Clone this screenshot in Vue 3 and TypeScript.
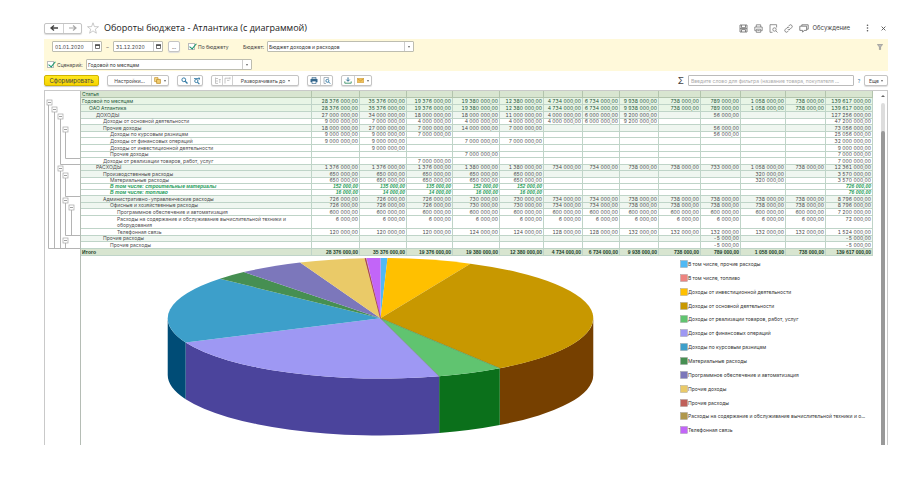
<script setup lang="ts">
import { ref } from 'vue'

interface Row {
  label: string
  level: number
  kind?: 'top' | 'parent' | 'note' | 'total'
  tight?: boolean
  values: (number | null)[]
}

interface Slice {
  label: string
  color: string
  wall?: string
  from: number
  to: number
}

const dateFrom = ref('01.01.2020')
const dateTo = ref('31.12.2020')
const byBudget = ref(true)
const byScenario = ref(true)
const filterText = ref('')

const _ = null
const all = [28376, 35376, 19376, 19380, 12380, 4734, 6734, 9938, 738, 789, 1058, 738, 139617]
const production = [650, 650, 650, 650, 650, _, _, _, _, _, 320, _, 3570]
const admin = [726, 726, 726, 730, 730, 734, 734, 738, 738, 738, 738, 738, 8796]
const otherCosts = [_, _, _, _, _, _, _, _, _, -5, _, _, -5]

// Amounts are kept in thousands of roubles, twelve months and the yearly total.
const rows: Row[] = [
  { label: 'Годовой по месяцам', level: 0, kind: 'top', values: all },
  { label: 'ОАО Атлантика', level: 1, kind: 'top', values: all },
  { label: 'ДОХОДЫ', level: 2, kind: 'parent', values: [27000, 34000, 18000, 18000, 11000, 4000, 6000, 9200, _, 56, _, _, 127256] },
  { label: 'Доходы от основной деятельности', level: 3, tight: true, values: [9000, 7000, 4000, 4000, 4000, 4000, 6000, 9200, _, _, _, _, 47200] },
  { label: 'Прочие доходы', level: 3, kind: 'parent', values: [18000, 27000, 7000, 14000, 7000, _, _, _, _, 56, _, _, 73056] },
  { label: 'Доходы по курсовым разницам', level: 4, tight: true, values: [9000, 9000, 7000, _, _, _, _, _, _, 56, _, _, 25056] },
  { label: 'Доходы от финансовых операций', level: 4, values: [9000, 9000, _, 7000, 7000, _, _, _, _, _, _, _, 32000] },
  { label: 'Доходы от инвестиционной деятельности', level: 4, values: [_, 9000, _, _, _, _, _, _, _, _, _, _, 9000] },
  { label: 'Прочие доходы', level: 4, tight: true, values: [_, _, _, 7000, _, _, _, _, _, _, _, _, 7000] },
  { label: 'Доходы от реализации товаров, работ, услуг', level: 3, values: [_, _, 7000, _, _, _, _, _, _, _, _, _, 7000] },
  { label: 'РАСХОДЫ', level: 2, kind: 'parent', tight: true, values: [1376, 1376, 1376, 1380, 1380, 734, 734, 738, 738, 733, 1058, 738, 12361] },
  { label: 'Производственные расходы', level: 3, kind: 'parent', values: production },
  { label: 'Материальные расходы', level: 4, tight: true, values: production },
  { label: 'В том числе: строительные материалы', level: 4, kind: 'note', tight: true, values: [152, 135, 135, 152, 152, _, _, _, _, _, _, _, 726] },
  { label: 'В том числе: топливо', level: 4, kind: 'note', tight: true, values: [16, 14, 14, 16, 16, _, _, _, _, _, _, _, 76] },
  { label: 'Административно-управленческие расходы', level: 3, kind: 'parent', values: admin },
  { label: 'Офисные и хозяйственные расходы', level: 4, kind: 'parent', tight: true, values: admin },
  { label: 'Программное обеспечение и автоматизация', level: 5, values: [600, 600, 600, 600, 600, 600, 600, 600, 600, 600, 600, 600, 7200] },
  { label: 'Расходы на содержание и обслуживание вычислительной техники и\nоборудования', level: 5, values: [6, 6, 6, 6, 6, 6, 6, 6, 6, 6, 6, 6, 72] },
  { label: 'Телефонная связь', level: 5, values: [120, 120, 120, 124, 124, 128, 128, 132, 132, 132, 132, 132, 1524] },
  { label: 'Прочие расходы', level: 3, kind: 'parent', tight: true, values: otherCosts },
  { label: 'Прочие расходы', level: 4, values: otherCosts },
  { label: 'Итого', level: 0, kind: 'total', values: all },
]

function money(v: number | null): string {
  if (v === null) return ''
  const digits = String(Math.abs(v)).replace(/\B(?=(\d{3})+$)/g, '\u00a0')
  return (v < 0 ? '-' : '') + digits + '\u00a0000,00'
}

const slices: Slice[] = [
  { label: 'В том числе, прочие расходы', color: '#4fb9f5', from: 0, to: 1.9 },
  { label: 'В том числе, топливо', color: '#ee8480', from: 1.9, to: 1.9 },
  { label: 'Доходы от инвестиционной деятельности', color: '#ffc000', from: 1.9, to: 25 },
  { label: 'Доходы от основной деятельности', color: '#c89800', wall: '#764000', from: 25, to: 145.9 },
  { label: 'Доходы от реализации товаров, работ, услуг', color: '#60c470', wall: '#0b701b', from: 145.9, to: 164 },
  { label: 'Доходы от финансовых операций', color: '#9e98f3', wall: '#4b449c', from: 164, to: 246.3 },
  { label: 'Доходы по курсовым разницам', color: '#3d9fca', wall: '#004c76', from: 246.3, to: 311 },
  { label: 'Материальные расходы', color: '#468f52', from: 311, to: 320 },
  { label: 'Программное обеспечение и автоматизация', color: '#7c77bb', from: 320, to: 337.8 },
  { label: 'Прочие доходы', color: '#eaca68', from: 337.8, to: 355.7 },
  { label: 'Прочие расходы', color: '#c0605a', from: 355.7, to: 356.1 },
  { label: 'Расходы на содержание и обслуживание вычислительной техники и о...', color: '#b0984c', from: 356.1, to: 356.2 },
  { label: 'Телефонная связь', color: '#c265f8', from: 356.2, to: 360 },
]

const pie = { cx: 300.5, cy: 62.5, rx: 213.5, ry: 60.5, depth: 57 }

function rim(deg: number, drop = 0): string {
  const t = (deg * Math.PI) / 180
  const x = pie.cx + pie.rx * Math.sin(t)
  const y = pie.cy - pie.ry * Math.cos(t) + drop
  return `${x.toFixed(2)} ${y.toFixed(2)}`
}

function topPath(s: Slice): string {
  const large = s.to - s.from > 180 ? 1 : 0
  return `M${pie.cx} ${pie.cy}L${rim(s.from)}A${pie.rx} ${pie.ry} 0 ${large} 1 ${rim(s.to)}Z`
}

// Only the front half of the rim, 90° to 270°, shows its outer wall.
function wallPath(s: Slice): string {
  const a = Math.max(s.from, 90)
  const b = Math.min(s.to, 270)
  const arc = `A${pie.rx} ${pie.ry} 0 0`
  return `M${rim(a)}${arc} 1 ${rim(b)}L${rim(b, pie.depth)}${arc} 0 ${rim(a, pie.depth)}Z`
}

const walls = slices.filter((s) => s.wall)

const nodes = [
  [5, 12], [10, 19], [16, 26], [21, 39], [16, 78], [21, 85], [21, 110], [27, 117], [21, 150],
]
</script>

<template>
  <main class="page">
    <header class="head">
      <div class="group nav">
        <button type="button" aria-label="Назад">
          <svg width="9" height="8" viewBox="0 0 9 8"><path d="M1 4H8M4 1.5L1 4L4 6.5" fill="none" stroke="#444" stroke-width="1.4" /></svg>
        </button>
        <button type="button" aria-label="Вперёд">
          <svg width="9" height="8" viewBox="0 0 9 8"><path d="M1 4H8M5 1.5L8 4L5 6.5" fill="none" stroke="#a8a8a8" stroke-width="1.2" /></svg>
        </button>
      </div>
      <button type="button" class="plain star" aria-label="В избранное">
        <svg width="12" height="12" viewBox="0 0 12 12"><path d="M6 .8L7.4 4.6L11.5 4.7L8.3 7.2L9.4 11.2L6 8.9L2.6 11.2L3.7 7.2L.5 4.7L4.6 4.6Z" fill="#fff" stroke="#b5b5b5" stroke-width=".7" /></svg>
      </button>
      <h1>Обороты бюджета - Атлантика (с диаграммой)</h1>
      <div class="tools">
        <button type="button" class="plain" aria-label="Сохранить">
          <svg width="9" height="9" viewBox="0 0 9 9" fill="none" stroke="#777" stroke-width=".9"><path d="M1 1H8V8H1ZM2.5 1V3.7H6.5V1M2.5 8V5.6H6.5V8M1 4.6H8" /></svg>
        </button>
        <button type="button" class="plain" aria-label="Печать">
          <svg width="9" height="9" viewBox="0 0 9 9" fill="none" stroke="#777" stroke-width=".8"><path d="M2.3 3V.8H6.7V3M2.3 6.7H.8V3H8.2V6.7H6.7M2.3 5.2H6.7V8.3H2.3ZM3.3 6.6H5.7" /></svg>
        </button>
        <button type="button" class="plain" aria-label="Предварительный просмотр">
          <svg width="9" height="9" viewBox="0 0 9 9" fill="none" stroke="#777" stroke-width=".8"><path d="M3.5 8.3H1V.7H7.6V3.5M6.9 6.9L8.5 8.5" /><circle cx="5.5" cy="5.5" r="1.7" /></svg>
        </button>
        <button type="button" class="plain" aria-label="Ссылка">
          <svg width="9" height="9" viewBox="0 0 9 9" fill="none" stroke="#777" stroke-width=".9"><path d="M3.7 5.3A1.6 1.6 0 0 0 6 5.3L7.7 3.6A1.6 1.6 0 0 0 5.4 1.3L4.6 2.1M5.3 3.7A1.6 1.6 0 0 0 3 3.7L1.3 5.4A1.6 1.6 0 0 0 3.6 7.7L4.4 6.9" /></svg>
        </button>
        <button type="button" class="plain talk">
          <svg width="10" height="9" viewBox="0 0 10 9" fill="none" stroke="#666" stroke-width=".8"><path d="M2.8 2V.8H9.2V5.2H8M.8 2.2H7.6V6.4H5.2L3.6 8.2V6.4H.8Z" /></svg>
          Обсуждение
        </button>
        <button type="button" class="plain more" aria-label="Меню">
          <svg width="3" height="8" viewBox="0 0 3 8" fill="#555"><circle cx="1.5" cy="1.2" r=".8" /><circle cx="1.5" cy="4" r=".8" /><circle cx="1.5" cy="6.8" r=".8" /></svg>
        </button>
        <button type="button" class="plain" aria-label="Закрыть">
          <svg width="5" height="5" viewBox="0 0 5 5"><path d="M.6 .6L4.4 4.4M4.4 .6L.6 4.4" stroke="#555" stroke-width=".9" /></svg>
        </button>
      </div>
    </header>

    <section class="filters" aria-label="Отбор">
      <div class="line first">
        <div class="box date">
          <input v-model="dateFrom" type="text" aria-label="Начало периода" />
          <button type="button" aria-label="Выбрать начало">
            <svg width="5" height="5" viewBox="0 0 5 5"><path d="M.5 1H4.5V4.5H.5Z" fill="#fff" stroke="#555" stroke-width=".8" /><path d="M0 .3H5V2H0Z" fill="#555" /></svg>
          </button>
        </div>
        <span class="dash">–</span>
        <div class="box date">
          <input v-model="dateTo" type="text" aria-label="Конец периода" />
          <button type="button" aria-label="Выбрать конец">
            <svg width="5" height="5" viewBox="0 0 5 5"><path d="M.5 1H4.5V4.5H.5Z" fill="#fff" stroke="#555" stroke-width=".8" /><path d="M0 .3H5V2H0Z" fill="#555" /></svg>
          </button>
        </div>
        <div class="group dots"><button type="button">...</button></div>
        <label class="tick by-budget"><input v-model="byBudget" type="checkbox" />По бюджету</label>
        <label class="caption" for="budget">Бюджет:</label>
        <div class="box combo budget">
          <select id="budget"><option>Бюджет доходов и расходов</option></select>
          <i class="arrow"></i>
        </div>
        <button type="button" class="plain funnel" aria-label="Фильтр">
          <svg width="6" height="6" viewBox="0 0 6 6"><path d="M.4 .5H5.6L3.6 3V5.6H2.4V3Z" fill="#bbb" stroke="#888" stroke-width=".6" /></svg>
        </button>
      </div>
      <div class="line second">
        <label class="tick by-scenario"><input v-model="byScenario" type="checkbox" />Сценарий:</label>
        <div class="box combo scenario">
          <select aria-label="Сценарий"><option>Годовой по месяцам</option></select>
          <i class="arrow"></i>
        </div>
      </div>
    </section>

    <div class="toolbar">
      <button type="button" class="run">Сформировать</button>
      <div class="group">
        <button type="button" class="settings">Настройки...</button>
        <button type="button" class="mid" aria-label="Варианты">
          <svg width="7" height="7" viewBox="0 0 7 7"><path d="M.6 .6H4V4.6H.6Z" fill="#f6dc92" stroke="#c69328" stroke-width=".7" /><path d="M2.6 2.4H6.4V6.4H2.6Z" fill="#f3cf72" stroke="#b98520" stroke-width=".7" /></svg>
          <i class="arrow"></i>
        </button>
      </div>
      <div class="group">
        <button type="button" class="small" aria-label="Найти">
          <svg width="7" height="7" viewBox="0 0 7 7" fill="none" stroke="#357ca5"><circle cx="2.8" cy="2.8" r="1.9" stroke-width="1" /><path d="M4.2 4.2L6.5 6.5" stroke-width="1.3" /></svg>
        </button>
        <button type="button" class="small" aria-label="Искать дальше">
          <svg width="8" height="8" viewBox="0 0 8 8" fill="none" stroke="#357ca5"><circle cx="3.3" cy="4" r="1.6" stroke-width=".9" /><path d="M4.4 5.2L6.4 7.2" stroke-width="1.2" /><path d="M1 1.6H7M5.6 .4L7 1.6L5.6 2.8" stroke-width=".9" /></svg>
        </button>
      </div>
      <div class="group">
        <button type="button" class="slim" aria-label="Свернуть">
          <svg width="7" height="7" viewBox="0 0 7 7" fill="none" stroke="#b8b8b8" stroke-width=".8"><path d="M1.5 .5V6.5M1.5 1.5H4M1.5 4H4M1.5 6.4H4M5.8 6V2M4.8 3L5.8 2L6.6 3" /></svg>
        </button>
        <button type="button" class="slim" aria-label="Развернуть">
          <svg width="7" height="7" viewBox="0 0 7 7" fill="none" stroke="#b8b8b8" stroke-width=".8"><path d="M1 6.5V1.2H6M6 .2V2.4M3 3.4H5.4" /></svg>
        </button>
        <button type="button" class="expand">Разворачивать до <i class="arrow"></i></button>
      </div>
      <div class="group">
        <button type="button" class="small" aria-label="Печать">
          <svg width="8" height="7" viewBox="0 0 8 7"><path d="M2 .4H6V2H2Z" fill="#fff" stroke="#35678c" stroke-width=".7" /><path d="M.5 2H7.5V5.2H.5Z" fill="#35678c" /><path d="M2 4H6V6.6H2Z" fill="#fff" stroke="#35678c" stroke-width=".7" /></svg>
        </button>
        <button type="button" class="small" aria-label="Просмотр">
          <svg width="8" height="7" viewBox="0 0 8 7" fill="none"><path d="M3 6.5H1V.5H5.6V2" stroke="#8a9aa6" stroke-width=".7" /><circle cx="4.4" cy="3.8" r="1.5" stroke="#2f77a3" stroke-width=".9" /><path d="M5.5 4.9L7.2 6.6" stroke="#2f77a3" /></svg>
        </button>
      </div>
      <div class="group">
        <button type="button" class="small" aria-label="Сохранить">
          <svg width="8" height="7" viewBox="0 0 8 7" fill="none" stroke="#2f6f93"><path d="M4 .4V4M2.3 2.6L4 4.3L5.7 2.6" /><path d="M.8 4.4V6.2H7.2V4.4" stroke="#4a9c74" /></svg>
        </button>
        <button type="button" class="mid" aria-label="Отправить">
          <svg width="7" height="5" viewBox="0 0 7 5"><path d="M.3 .3H6.7V4.7H.3Z" fill="#efc05a" stroke="#c9952e" stroke-width=".6" /><path d="M.3 .5L3.5 2.9L6.7 .5" fill="none" stroke="#c08a22" stroke-width=".6" /></svg>
          <i class="arrow"></i>
        </button>
      </div>
      <div class="right">
        <span class="sigma">Σ</span>
        <input v-model="filterText" class="search" type="text" aria-label="Фильтр" placeholder="Введите слово для фильтра (название товара, покупателя ..." />
        <button type="button" class="plain help">?</button>
        <div class="group"><button type="button" class="else">Еще <i class="arrow"></i></button></div>
      </div>
    </div>

    <section class="report">
      <div class="gutter">
        <svg width="36" height="160" viewBox="0 0 36 160" fill="none">
          <path
            d="M4.5 15V158.500H36M10.500 22V158.500M16.500 29V74.500H36M21.500 42V68.500H36M16.500 81V158.500M21.500 88V106.500H36M21.500 113V145.500H36M27.500 120V145.500M21.500 153V158.500"
            stroke="#b4b4b4"
          />
          <g v-for="([x, y], i) in nodes" :key="i">
            <rect :x="x - 2" :y="y - 2" width="5" height="5" fill="#fff" stroke="#a5a5a5" stroke-width=".7" />
            <path :d="`M${x - 1} ${y + 0.5}H${x + 2}`" stroke="#777" stroke-width=".7" />
          </g>
        </svg>
      </div>
      <div class="sheet">
        <table>
          <colgroup>
            <col />
            <col class="w48" /><col class="w47" /><col class="w46" /><col class="w47" /><col class="w44" />
            <col class="w39" /><col class="w37" /><col class="w39" /><col class="w42" /><col class="w40" />
            <col class="w45" /><col class="w40" /><col class="w47" />
          </colgroup>
          <thead>
            <tr>
              <th scope="col">Статья</th>
              <td v-for="n in 13" :key="n"></td>
            </tr>
          </thead>
          <tbody>
            <tr v-for="(row, i) in rows" :key="i" :class="[row.kind, { tight: row.tight }]">
              <th scope="row" :class="'level-' + row.level">{{ row.label }}</th>
              <td v-for="(v, c) in row.values" :key="c">{{ money(v) }}</td>
            </tr>
          </tbody>
        </table>
        <div class="diagram">
          <svg class="pie" viewBox="0 0 601 190" role="img" aria-label="Диаграмма оборотов">
            <path v-for="s in walls" :key="s.label" :d="wallPath(s)" :fill="s.wall" />
            <path v-for="s in slices" :key="s.label" :d="topPath(s)" :fill="s.color" />
            <path :d="`M${pie.cx} ${pie.cy}L${rim(355.9)}`" stroke="#a03c50" stroke-width=".8" />
            <path :d="`M${rim(145.9)}L${pie.cx} ${pie.cy}L${rim(164)}`" fill="none" stroke="#5b7a45" stroke-width=".5" />
          </svg>
          <ul class="legend">
            <li v-for="s in slices" :key="s.label">
              <svg width="8" height="8" viewBox="0 0 8 8"><rect x=".5" y=".5" width="7" height="7" :fill="s.color" stroke="#999" stroke-width=".4" /></svg>
              <span>{{ s.label }}</span>
            </li>
          </ul>
        </div>
      </div>
      <div class="scroll" aria-hidden="true">
        <i class="up"></i>
        <div class="track"><div class="thumb"></div></div>
      </div>
    </section>
  </main>
</template>

<style>
body {
  background: #fff;
}
</style>

<style scoped>
* {
  box-sizing: border-box;
}
.page {
  padding: 17px 25px 0 44px;
  font: 5px/8px Inter, "Liberation Sans", Arial, sans-serif;
  font-variant-numeric: tabular-nums;
  color: #444;
}
button,
input,
select {
  margin: 0;
  padding: 0;
  border: 0;
  background: none;
  font: inherit;
  color: inherit;
}
button {
  display: flex;
  align-items: center;
  justify-content: center;
  white-space: nowrap;
}
svg {
  display: block;
  flex: none;
}
.head {
  display: flex;
  align-items: center;
  height: 22px;
}
.group {
  display: flex;
  flex: none;
  height: 11px;
  border: 1px solid #c4c4c4;
  border-radius: 2px;
  background: #fff;
  box-shadow: 0 1px 1px #ddd;
}
.group button + button {
  border-left: 1px solid #d0d0d0;
}
.nav button {
  width: 18px;
}
.star {
  margin: 0 5px;
}
h1 {
  margin: 0;
  font-family: "Open Sans", "Noto Sans", sans-serif;
  font-size: 9px;
  line-height: 14px;
  font-weight: 400;
  color: #222;
  white-space: nowrap;
}
.tools {
  display: flex;
  align-items: center;
  gap: 6px;
  margin-left: auto;
  padding-right: 2px;
}
.talk {
  gap: 3px;
  font-size: 6px;
}
.more {
  margin: 0 6px 0 10px;
}
.filters {
  display: flex;
  flex-direction: column;
  gap: 7px;
  height: 32px;
  padding: 2px 3px 0;
  background: #fff9da;
}
.line {
  display: flex;
  align-items: center;
  height: 11px;
}
.first {
  padding-left: 5px;
}
.box {
  display: flex;
  flex: none;
  height: 11px;
  border: 1px solid #bdbdb0;
  border-radius: 1px;
  background: #fff;
}
.box input {
  flex: 1;
  min-width: 0;
  padding-left: 2px;
}
.date {
  width: 50px;
}
.date button {
  width: 9px;
  border-left: 1px solid #ccc;
}
.dash {
  width: 11px;
  text-align: center;
}
.dots {
  width: 12px;
  margin-left: 5px;
}
.dots button {
  flex: 1;
}
.tick {
  display: flex;
  align-items: center;
  gap: 3px;
  white-space: nowrap;
}
.tick input {
  appearance: none;
  flex: none;
  width: 7px;
  height: 7px;
  border: 1px solid #bbb;
  background: #fff;
}
.tick input:checked::after {
  content: "";
  display: block;
  width: 3px;
  height: 6px;
  margin: -2px 0 0 2px;
  border: solid #14936a;
  border-width: 0 1px 1px 0;
  transform: rotate(40deg);
}
.by-budget {
  width: 55px;
  margin-left: 8px;
}
.by-scenario {
  width: 39px;
}
.caption {
  width: 24px;
  white-space: nowrap;
}
.combo {
  position: relative;
}
.combo select {
  flex: 1;
  padding-left: 1px;
  appearance: none;
  color: #333;
}
.combo .arrow {
  position: absolute;
  right: 3px;
  top: 4px;
}
.combo::after {
  content: "";
  position: absolute;
  right: 8px;
  top: 0;
  bottom: 0;
  border-left: 1px solid #ccc;
}
.budget {
  width: 147px;
}
.scenario {
  width: 166px;
}
.arrow {
  display: block;
  border: solid transparent;
  border-width: 2px 1px 0;
  border-top-color: #666;
  pointer-events: none;
}
.funnel {
  margin-left: auto;
  padding-right: 2px;
}
.toolbar {
  display: flex;
  align-items: center;
  gap: 8px;
  height: 19px;
}
.run {
  width: 55px;
  height: 11px;
  border: 1px solid #d0b400;
  border-radius: 2px;
  background: linear-gradient(#ffe81e, #f7d400);
  box-shadow: 0 1px 1px #ccc;
  font-size: 6px;
}
.settings {
  width: 43px;
}
.small {
  width: 12px;
}
.slim {
  width: 10px;
}
.mid {
  gap: 3px;
  width: 17px;
}
.expand {
  gap: 3px;
  width: 66px;
}
.right {
  display: flex;
  flex: 1;
  align-items: center;
  justify-content: flex-end;
}
.sigma {
  margin-right: 4px;
  font-size: 9px;
  line-height: 11px;
}
.search {
  width: 166px;
  height: 11px;
  padding: 0 2px;
  border: 1px solid #bbb;
  border-radius: 1px;
}
.search::placeholder {
  color: #aaa;
}
.help {
  width: 10px;
  color: #357ca5;
}
.else {
  gap: 2px;
  width: 22px;
}
.report {
  display: flex;
  border: solid #c9c9c9;
  border-width: 1px 1px 0;
}
.gutter {
  flex: none;
  width: 35px;
}
.gutter svg {
  margin: -1px 0 0 -1px;
}
.sheet {
  flex: 1;
  min-width: 0;
  border-left: 1px solid #b5bdb5;
}
table {
  width: 100%;
  table-layout: fixed;
  border-spacing: 0;
  line-height: 6px;
  color: #4c4c4c;
}
th,
td {
  height: 7px;
  padding: 0;
  border: solid #bfd4c8;
  border-width: 0 1px 1px 0;
  line-height: 6px;
  vertical-align: top;
  white-space: nowrap;
}
th {
  font-weight: 400;
  text-align: left;
  white-space: pre-line;
}
td {
  padding-right: 1px;
  text-align: right;
}
.tight th,
.tight td {
  height: 6px;
  line-height: 5px;
}
thead th,
thead td {
  padding-left: 1px;
  background: #d8e5d0;
  border-color: #b2c4ac;
  color: #1c5c3c;
}
.top th,
.top td {
  background: #e8f5e6;
  color: #1d5638;
}
.parent th,
.parent td {
  background: #eff6f0;
}
.note th,
.note td {
  color: #1d9c58;
  font-family: "Liberation Sans", Arial, sans-serif;
  font-weight: 700;
  font-style: italic;
}
.total th,
.total td {
  background: #d8e5d0;
  color: #20402a;
  font-family: "Liberation Sans", Arial, sans-serif;
  font-weight: 700;
}
.level-0 {
  padding-left: 1px;
}
.level-1 {
  padding-left: 8px;
}
.level-2 {
  padding-left: 15px;
}
.level-3 {
  padding-left: 22px;
}
.level-4 {
  padding-left: 29px;
}
.level-5 {
  padding-left: 36px;
}
.w37 {
  width: 37px;
}
.w39 {
  width: 39px;
}
.w40 {
  width: 40px;
}
.w42 {
  width: 42px;
}
.w44 {
  width: 44px;
}
.w45 {
  width: 45px;
}
.w46 {
  width: 46px;
}
.w47 {
  width: 47px;
}
.w48 {
  width: 48px;
}
.diagram {
  display: flex;
}
.pie {
  flex: 1;
  min-width: 0;
}
.legend {
  display: flex;
  flex: none;
  flex-direction: column;
  justify-content: space-between;
  width: 193px;
  margin: 0;
  padding: 4px 0 11px;
  list-style: none;
  color: #333;
}
.legend li {
  display: flex;
  align-items: center;
  height: 8px;
  white-space: nowrap;
}
.scroll {
  display: flex;
  flex: none;
  flex-direction: column;
  align-items: center;
  width: 14px;
  padding: 4px 0 0 6px;
}
.up {
  border: solid transparent;
  border-width: 0 2px 2px;
  border-bottom-color: #666;
}
.track {
  display: flex;
  flex: 1;
  width: 4px;
  margin-top: 6px;
  padding-top: 28px;
  border-radius: 2px 2px 0 0;
  background: #ddd;
}
.thumb {
  flex: 1;
  border-radius: 2px 2px 0 0;
  background: #999;
}
</style>
